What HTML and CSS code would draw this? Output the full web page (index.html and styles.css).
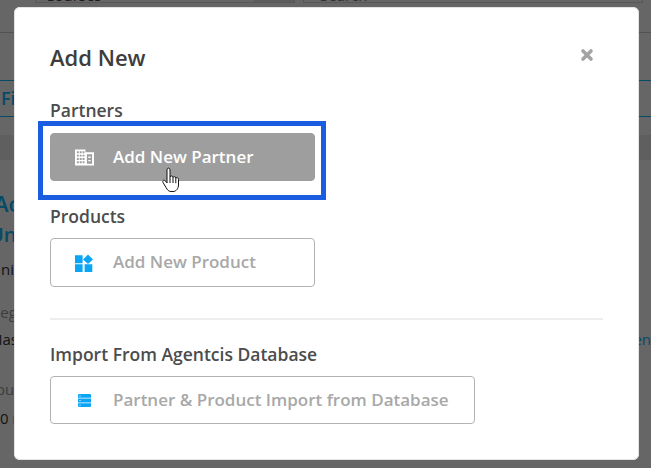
FILE: index.html
```html
<!DOCTYPE html>
<html lang="en">
<head>
    <meta charset="UTF-8">
    <meta name="viewport" content="width=device-width, initial-scale=1.0">
    <title>Add New</title>
    <link rel="stylesheet" href="styles.css">
</head>
<body>
    <div class="page">
        <div class="filters">
            <div class="filter filter-courses">Courses<div class="filter-arrow"></div></div>
            <div class="filter filter-search">Search</div>
        </div>
        <div class="rule"></div>
        <div class="tabs"><span class="tab">Filter</span></div>
        <div class="band"></div>
        <div class="details">
            <div class="heading">Academic</div>
            <div class="subheading">University</div>
            <div class="line line-uni">University</div>
            <div class="line line-reg muted">Region</div>
            <div class="line-row">
                <div class="line line-mas">Masters</div>
                <div class="side-link">en</div>
            </div>
            <div class="line line-hours muted">Hours</div>
            <div class="line line-min">0 min</div>
        </div>
    </div>

    <div class="backdrop"></div>

    <div class="modal">
        <div class="modal-header">
            <h1>Add New</h1>
            <svg class="close" viewBox="0 0 14 14" width="14" height="14">
                <path d="M3 3l8 8M11 3l-8 8" stroke="#a3a3a3" stroke-width="3.6" stroke-linecap="round" fill="none"/>
            </svg>
        </div>

        <h2 class="label-partners">Partners</h2>
        <div class="highlight">
            <div class="option option-active">
                <svg class="icon" viewBox="0 0 20 17" width="19" height="17">
                    <path fill="#fff" fill-rule="evenodd" d="M0 0h11v3h9v14H0zM2 2v2h2V2zm3 0v2h2V2zm3 0v2h2V2zM2 5.500v2h2v-2zm3 0v2h2v-2zm3 0v2h2v-2zM2 9v2h2V9zm3 0v2h2V9zm3 0v2h2V9zM2 12.500v2h2v-2zm3 0v2h2v-2zm3 0v2h2v-2zm4.500-7.500V15H18V5zM14 7.500h2.500V9H14zm0 3.500h2.500v1.500H14z"/>
                </svg>
                <span class="option-text">Add New Partner</span>
            </div>
            <svg class="cursor" viewBox="0 0 18 26" width="18" height="26">
                <path fill="#fff" stroke="#111" stroke-width="1" stroke-linejoin="round" d="M5 3c0-2.500 3-2.500 3 0v7c.5-1.500 3-1.500 3 .5.500-1.300 2.800-1.100 2.800.7.600-1 2.700-.8 2.700 1.300v5.500c0 3-2 6.500-5.500 6.500H9c-2.500 0-3.500-1.500-5-4L1 15.500c-1-2 1.200-3 2.500-1.500L5 16z"/>
                <path stroke="#111" stroke-width="1" fill="none" d="M8 10v6M11 10.500v5.500M13.800 11.200v5"/>
            </svg>
        </div>

        <h2 class="label-products">Products</h2>
        <div class="option">
            <svg class="icon" viewBox="0 0 18 18" width="18" height="18">
                <path fill="#0aa5f5" d="M0 1.300h7.600v8H0zM0 10.300h7.600V18H0zM9.600 10.300h7.700V18H9.600zM13 .5l5 5-5 4.500-5-4.500z"/>
            </svg>
            <span class="option-text">Add New Product</span>
        </div>

        <hr class="divider">

        <h2 class="label-import">Import From Agentcis Database</h2>
        <div class="option option-import">
            <svg class="icon icon-db" viewBox="0 0 13 13" width="13" height="13">
                <path fill="#0aa5f5" fill-rule="evenodd" d="M1 0h11a1 1 0 0 1 1 1v2.700H0V1a1 1 0 0 1 1-1zM0 4.600h13v3.800H0zM0 9.300h13V12a1 1 0 0 1-1 1H1a1 1 0 0 1-1-1zM1.500 1.400v1h1v-1zm0 4.600v1h1V6zm0 4.700v1h1v-1z"/>
            </svg>
            <span class="option-text">Partner &amp; Product Import from Database</span>
        </div>
    </div>
</body>
</html>
```

FILE: styles.css
```css
* {
    box-sizing: border-box;
}
body {
    font-family: "Open Sans", Arial, sans-serif;
    margin: 0;
    width: 651px;
    height: 468px;
    overflow: hidden;
    background: #fff;
    color: #333;
}
.page {
    height: 468px;
    overflow: hidden;
    white-space: nowrap;
}
.filters {
    display: flex;
    gap: 8px;
    height: 17px;
    margin-top: -14px;
    padding-left: 35px;
    font-size: 15px;
    line-height: 17px;
    color: #444;
}
.filter {
    display: flex;
    justify-content: space-between;
    border: 1px solid #ddd;
}
.filter-courses {
    width: 260px;
    padding-left: 9px;
}
.filter-search {
    width: 340px;
    padding-left: 16px;
    color: #777;
}
.filter-arrow {
    width: 40px;
    background: #e6e6e6;
}
.rule {
    height: 1px;
    margin-top: 29px;
    background: #ccc;
}
.tabs {
    margin-top: 47px;
    height: 37px;
    padding-left: 1px;
    border-top: 1px solid #10baff;
    border-bottom: 1px solid #10baff;
    font-size: 18px;
    font-weight: 600;
    line-height: 35px;
    color: #10baff;
}
.band {
    height: 25px;
    margin-top: 18px;
    background: #eee;
}
.details {
    font-size: 15px;
    line-height: 20px;
}
.heading {
    margin: 28px 0 0 -6px;
    font-size: 22px;
    font-weight: 600;
    line-height: 30px;
    color: #10baff;
}
.subheading {
    margin: 4px 0 0 -11px;
    font-size: 20px;
    font-weight: 600;
    line-height: 26px;
    color: #10baff;
}
.muted {
    color: #999;
}
.line-uni {
    margin: 11px 0 0 -10px;
}
.line-reg {
    margin: 23px 0 0 -9px;
}
.line-row {
    display: flex;
    justify-content: space-between;
    width: 651px;
    margin-top: 7px;
}
.line-mas {
    margin-left: -11px;
}
.side-link {
    color: #10baff;
}
.line-hours {
    margin: 30px 0 0 -15px;
}
.line-min {
    margin-top: 9px;
}
.backdrop {
    position: absolute;
    inset: 0;
    background: rgba(0, 0, 0, 0.6);
}
.modal {
    position: absolute;
    left: 14px;
    top: 7px;
    width: 625px;
    height: 453px;
    padding: 0 36px;
    background: #fff;
    border-radius: 6px;
    box-shadow: inset 0 0 0 1px #e4e4e4;
}
.modal-header {
    display: flex;
    justify-content: space-between;
    align-items: center;
    height: 34px;
    margin-top: 33px;
}
h1 {
    margin: 0;
    font-size: 22px;
    font-weight: 600;
    color: #3d3d3d;
}
.close {
    margin: 0 9px 4px 0;
}
h2 {
    margin: 0;
    font-size: 17.5px;
    font-weight: 600;
    line-height: 22px;
    color: #4c4c4c;
}
.label-partners {
    margin-top: 25px;
}
.highlight {
    position: relative;
    width: 288px;
    margin-left: -12px;
    padding: 7px 6px 14px 7px;
    border: 5px solid #1a5de0;
}
.option {
    display: grid;
    grid-template-columns: 38px auto;
    align-items: center;
    height: 49px;
    width: 265px;
    padding-left: 24px;
    border: 1px solid #b3b3b3;
    border-radius: 4px;
    font-size: 17px;
    font-weight: 600;
    color: #a8a8a8;
    background: #fff;
}
.option-text {
    padding-bottom: 2px;
}
.option-active {
    height: 48px;
    background: #9e9e9e;
    border-color: #9e9e9e;
    color: #fff;
}
.option-import {
    width: 425px;
    height: 48px;
}
.icon-db {
    margin-left: 3px;
}
.cursor {
    position: absolute;
    left: 119px;
    top: 41px;
}
.label-products {
    margin-top: 5px;
    margin-bottom: 11px;
}
.divider {
    border: 0;
    border-top: 2px solid #eee;
    margin: 31px 0 0 0;
}
.label-import {
    margin-top: 23px;
    margin-bottom: 11px;
}
```
